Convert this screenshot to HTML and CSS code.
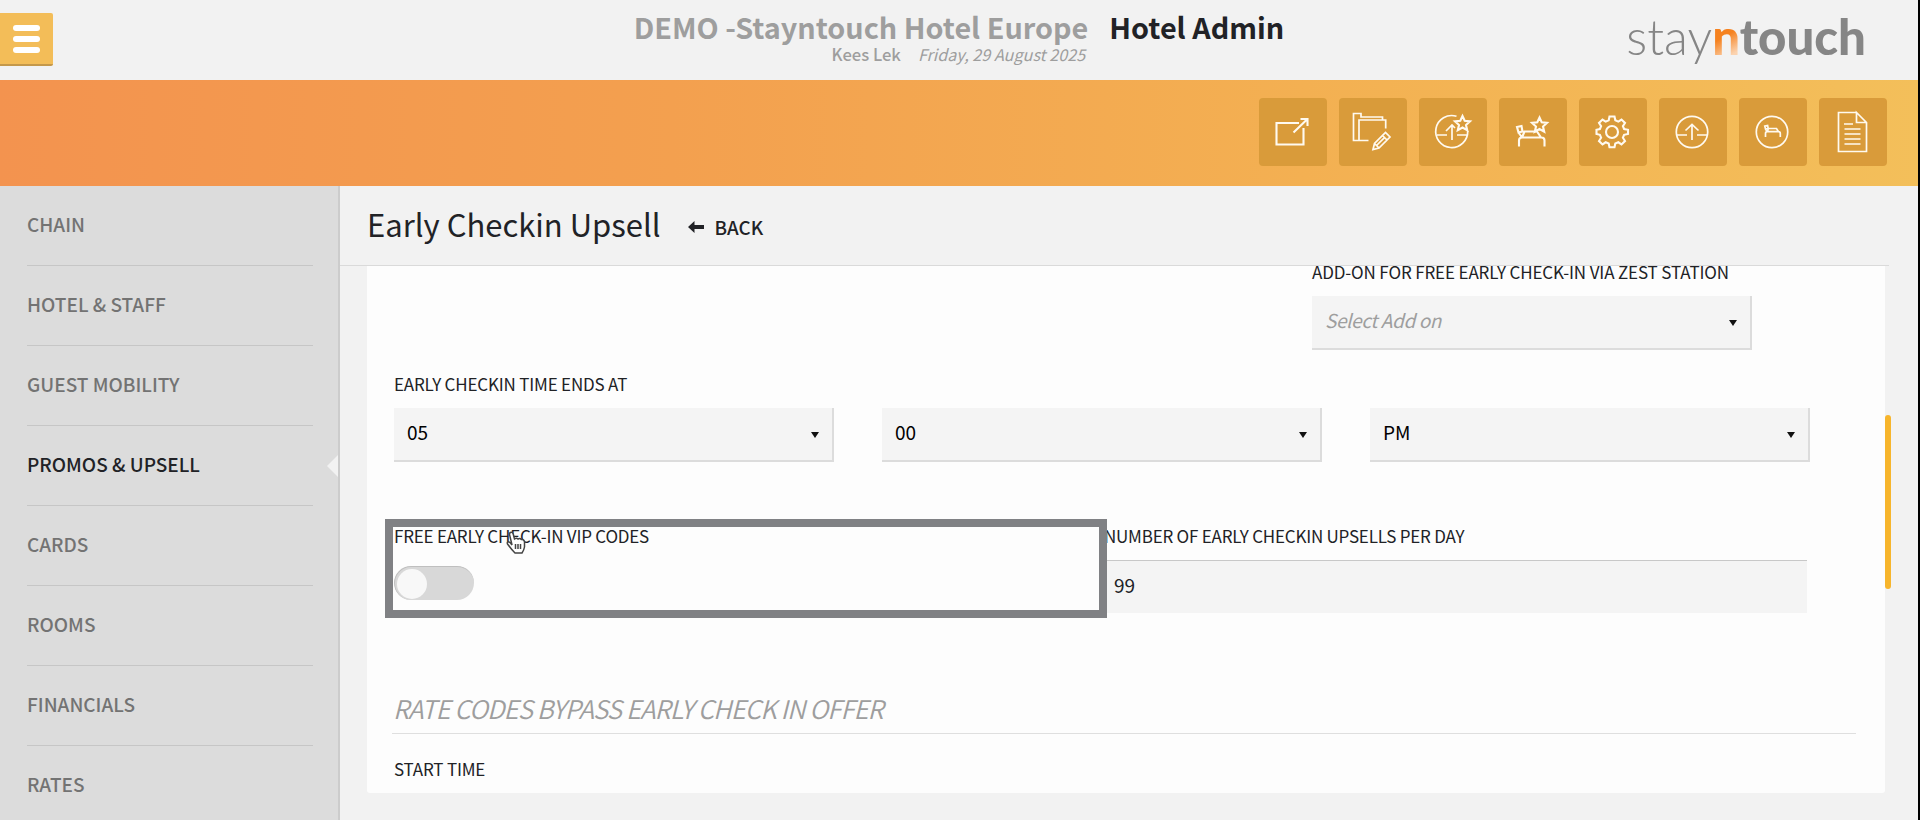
FILE: index.html
```html
<!DOCTYPE html>
<html lang="en">
  <head>
    <meta charset="UTF-8" />
    <meta name="viewport" content="width=device-width, initial-scale=1.0" />
    <title>Hotel Admin</title>
    <link rel="stylesheet" href="styles.css">
  </head>
  <body>
    <header class="header">
      <button type="button" class="menu-btn">
        <span></span>
        <span></span>
        <span></span>
      </button>
      <div class="heading">
        <div class="hotel">DEMO -Stayntouch Hotel Europe</div>
        <h1 class="area">Hotel Admin</h1>
        <div class="user">
          <span class="user-name">Kees Lek</span>
          <span class="date">Friday, 29 August 2025</span>
        </div>
      </div>
      <div class="logo"><span class="thin">stay</span><span class="n">n</span><span class="heavy">touch</span></div>
    </header>

    <nav class="toolbar">
      <button type="button" class="tool">
        <svg viewBox="0 0 68 68">
          <path d="M40 25H17.500V46.500H44.500V30M34.500 34.500L48.500 21M41.500 21H48.500V28" class="bold" />
        </svg>
      </button>
      <button type="button" class="tool">
        <svg viewBox="0 0 68 68">
          <path d="M29.500 42.500H14.500V15.500H22V19H43.500V22M46.700 30.500V22H20V42.500" />
          <path d="M34 51.500L35.500 45.500L46.500 34.500L51 39L40 50ZM35.500 45.500L40 50M43.500 37.500L48 42M38 47L45.500 39.700" />
        </svg>
      </button>
      <button type="button" class="tool">
        <svg viewBox="0 0 68 68">
          <path d="M37.500 18.300A16 16 0 1 0 48.700 33M33 42V27M27 33L33 27L36 30M18 37H28M38 37H48" />
          <path d="M43.500 18L45.700 22.800L51 23.400L47 27L48.200 32.200L43.500 29.500L38.800 32.200L40 27L36 23.400L41.300 22.800Z" class="bold" />
        </svg>
      </button>
      <button type="button" class="tool">
        <svg viewBox="0 0 68 68">
          <path d="M20 48.500V42.500Q20 39.500 23 39.500H42.500Q45.500 39.500 45.500 42.500V48.500M23 39.500L25.500 33.500H38L42 39.500M18 29L22.500 28L23.500 33.500L19.500 34.500ZM19.500 34.500L23 39.500" class="bold" />
          <path d="M40.500 19.500L42.700 24.300L48 24.900L44 28.500L45.200 33.700L40.500 31L35.800 33.700L37 28.500L33 24.900L38.300 24.300Z" class="bold" />
        </svg>
      </button>
      <button type="button" class="tool">
        <svg viewBox="0 0 68 68">
          <path class="bold" d="M30.500 18.500H35.500L36.300 22.300L39.300 23.600L42.500 21.500L46 25L43.900 28.200L45.100 31L49 31.800V36L45.100 36.800L43.900 39.700L46 43L42.500 46.400L39.300 44.300L36.300 45.500L35.500 49.300H30.500L29.700 45.500L26.700 44.300L23.500 46.400L20 43L22.100 39.700L20.900 36.800L17.500 36V31.800L20.900 31L22.100 28.200L20 25L23.500 21.500L26.700 23.600L29.700 22.300Z" />
          <circle class="bold" cx="33" cy="34" r="6" />
        </svg>
      </button>
      <button type="button" class="tool">
        <svg viewBox="0 0 68 68">
          <circle cx="33" cy="34" r="15.700" />
          <path d="M33 42V26.500M26.500 32.500L33 26.500L39.500 32.500M18 37H28M38 37H48" />
        </svg>
      </button>
      <button type="button" class="tool">
        <svg viewBox="0 0 68 68">
          <circle cx="33" cy="34" r="15.700" />
          <path d="M26.500 39V35.500Q26.500 33.700 28.300 33.700H39.500Q41.300 33.700 41.300 35.500V39M28.300 33.700L29.500 30.500H37.500L39.500 33.700M25.800 28.200L28.600 27.600L29.200 30.600L26.600 31.200ZM26.600 31.200L28.300 33.700" />
        </svg>
      </button>
      <button type="button" class="tool">
        <svg viewBox="0 0 68 68">
          <path d="M37.500 14.500H19.500V53.500H47.500V24.500L37.500 14.500V24.500H47.500M25 26H34M25.500 31H41.500M25.500 36H41.500M25.500 41H41.500M25.500 46H41.500" />
        </svg>
      </button>
    </nav>

    <div class="page">
      <aside class="sidebar">
        <a class="side-item">CHAIN</a>
        <a class="side-item">HOTEL &amp; STAFF</a>
        <a class="side-item">GUEST MOBILITY</a>
        <a class="side-item active">PROMOS &amp; UPSELL</a>
        <a class="side-item">CARDS</a>
        <a class="side-item">ROOMS</a>
        <a class="side-item">FINANCIALS</a>
        <a class="side-item">RATES</a>
      </aside>

      <main class="main">
        <div class="main-head">
          <h2 class="title">Early Checkin Upsell</h2>
          <a class="back">
            <svg class="back-arrow" viewBox="0 0 16 12">
              <path d="M0 6L6.500 0V4H16V8H6.500V12Z" />
            </svg>
            BACK
          </a>
        </div>

        <div class="scroll-area">
          <form class="panel">
            <div class="row addon">
              <div class="field">
                <label class="label">ADD-ON FOR FREE EARLY CHECK-IN VIA ZEST STATION</label>
                <div class="select placeholder">Select Add on</div>
              </div>
            </div>

            <label class="label">EARLY CHECKIN TIME ENDS AT</label>
            <div class="row times">
              <div class="select">05</div>
              <div class="select">00</div>
              <div class="select">PM</div>
            </div>

            <div class="row two">
              <div class="field vip">
                <label class="label">FREE EARLY CHECK-IN VIP CODES</label>
                <div class="switch"><span class="knob"></span></div>
                <div class="highlight"></div>
                <svg class="hand" viewBox="0 0 20 24">
                  <path d="M6 14L3.500 3.500Q3.300 1.500 5 1.200Q6.600 1 7.200 3L8.500 8Q10.500 6.500 12 8Q14 6.800 15.300 8.500Q18 8 18.500 11V16Q18 19 16 22H9Q6 19 1.500 13Q0.800 11 2.500 10.800Q4 11 6 14ZM9.500 13V18M12 13V18M14.500 13V18" />
                </svg>
              </div>
              <div class="field">
                <label class="label">NUMBER OF EARLY CHECKIN UPSELLS PER DAY</label>
                <div class="input">99</div>
              </div>
            </div>

            <h3 class="section-title">RATE CODES BYPASS EARLY CHECK IN OFFER</h3>
            <label class="label">START TIME</label>
          </form>
          <div class="scrollbar"></div>
        </div>
      </main>
    </div>
  </body>
</html>
```
FILE: styles.css
```css
* {
  box-sizing: border-box;
}
body {
  width: 100%;
  height: 820px;
  margin: 0;
  overflow: hidden;
  display: flex;
  flex-direction: column;
  background: #f2f2f2;
  border-right: 2px solid #000;
  color: #212226;
  font-family: "Noto Sans CJK SC", "Open Sans", sans-serif;
}
button {
  border: none;
  padding: 0;
}
h1,
h2,
h3 {
  margin: 0;
}
.header {
  height: 80px;
  flex: none;
  display: grid;
  grid-template-columns: 1fr auto 1fr;
  align-items: start;
}
.menu-btn {
  width: 53px;
  height: 53px;
  margin-top: 13px;
  display: flex;
  flex-direction: column;
  align-items: center;
  justify-content: center;
  gap: 5px;
  background: #f3bd58;
  border-bottom: 2px solid #c4984a;
  border-radius: 0 2px 2px 0;
}
.menu-btn span {
  width: 27px;
  height: 6px;
  border-radius: 3px;
  background: white;
}
.heading {
  display: grid;
  grid-template-columns: auto auto;
  column-gap: 21px;
  padding-top: 9px;
  white-space: nowrap;
}
.hotel,
.area {
  font-size: 28.8px;
  line-height: 36px;
  font-weight: 700;
}
.hotel {
  color: #9e9e9e;
}
.user {
  display: flex;
  justify-content: flex-end;
  gap: 17px;
  padding-right: 3px;
  font-size: 16.2px;
  line-height: 18px;
  color: #9e9e9e;
}
.user-name {
  font-size: 16.6px;
  font-weight: 500;
}
.date {
  font-style: italic;
}
.logo {
  justify-self: end;
  margin: 6px 52px 0 0;
  font-family: Lato, sans-serif;
  font-size: 49.2px;
  line-height: 60px;
  color: #868686;
}
.thin {
  font-weight: 300;
}
.heavy {
  font-weight: 900;
}
.n {
  font-weight: 900;
  background: linear-gradient(150deg, #f58220 50%, #fbd3b0 80%);
  -webkit-background-clip: text;
  background-clip: text;
  color: transparent;
}
.toolbar {
  height: 106px;
  flex: none;
  display: flex;
  justify-content: flex-end;
  gap: 12px;
  padding: 18px 31.5px 0 0;
  background: linear-gradient(90deg, #f3934f, #f3a04f 35%, #f3b052 68%, #f3bf5a);
}
.tool {
  width: 68px;
  height: 68px;
  border-radius: 4px;
  background: #d99b3a;
}
.tool svg {
  display: block;
  width: 68px;
  height: 68px;
  fill: none;
  stroke: #fffaf0;
  stroke-width: 1.7;
}
.tool .bold {
  stroke-width: 2.1;
}
.page {
  flex: 1;
  min-height: 0;
  display: flex;
}
.sidebar {
  width: 340px;
  flex: none;
  padding: 0 25px 0 27px;
  background: #dcdcdc;
  border-right: 2px solid #cccccc;
  overflow: hidden;
  position: relative;
}
.side-item {
  display: block;
  height: 80px;
  line-height: 75px;
  border-bottom: 1px solid #c6c6c6;
  color: #737373;
  font-size: 19px;
  font-weight: 500;
}
.side-item.active {
  color: #212226;
}
/* notch that points at the open section */
.side-item.active::after {
  content: "";
  position: absolute;
  right: -2px;
  top: 267px;
  border: 13px solid transparent;
  border-left: none;
  border-right-color: #f2f2f2;
}
.main {
  flex: 1;
  min-width: 0;
}
.main-head {
  height: 80px;
  width: 1549px;
  display: flex;
  align-items: center;
  gap: 27px;
  padding: 0 0 3px 27px;
  border-bottom: 1px solid #dadada;
}
.title {
  font-size: 31px;
  font-weight: 400;
  line-height: 60px;
}
.back {
  display: flex;
  align-items: center;
  gap: 11px;
  padding-top: 5px;
  font-size: 18.8px;
  font-weight: 500;
}
.back-arrow {
  width: 16px;
  height: 12px;
  fill: #212226;
}
.scroll-area {
  display: flex;
  align-items: flex-start;
  padding-left: 27px;
}
.panel {
  width: 1518px;
  height: 527px;
  padding: 0 28px 0 27px;
  background: #fdfdfd;
  border-radius: 0 0 3px 3px;
}
.label {
  display: block;
  font-size: 17px;
  line-height: 24px;
  letter-spacing: -0.19px;
  white-space: nowrap;
}
.row {
  display: grid;
}
.addon {
  grid-template-columns: 440px;
  padding: 0 0 22px 918px;
}
.addon .label {
  line-height: 12px;
  letter-spacing: -0.14px;
}
.addon .select {
  margin-top: 18px;
}
.times {
  grid-template-columns: repeat(3, 440px);
  column-gap: 48px;
  margin: 12px 0 62px;
}
.two {
  grid-template-columns: 710px 703px;
  margin-bottom: 76px;
}
.two .label {
  letter-spacing: -0.22px;
}
.select,
.input {
  height: 53px;
  font-size: 19px;
  line-height: 48px;
  background: #f4f4f4;
}
.select {
  display: flex;
  height: 54px;
  justify-content: space-between;
  padding: 0 13px;
  color: #000;
  border-right: 2px solid #dcdcdc;
  border-bottom: 2px solid #dcdcdc;
}
.select::after {
  content: "";
  align-self: center;
  margin-top: 1px;
  border: 4px solid transparent;
  border-top: 6px solid #111;
  border-bottom: none;
}
.placeholder {
  color: #9e9e9e;
  font-style: italic;
  letter-spacing: -0.4px;
}
.input {
  margin-top: 12px;
  padding-left: 10px;
  border-top: 1px solid #c8c8c8;
}
.vip {
  position: relative;
}
.switch {
  width: 80px;
  height: 34px;
  margin-top: 18px;
  padding: 2px;
  border-radius: 17px;
  background: #d8d8d8;
  border-top: 1px solid #bfbfbf;
  border-left: 1px solid #bfbfbf;
}
.knob {
  display: block;
  width: 30px;
  height: 30px;
  border-radius: 50%;
  background: #f8f8f8;
}
.highlight {
  position: absolute;
  left: -9px;
  top: -5px;
  width: 722px;
  height: 99px;
  border: 8px solid #808184;
  z-index: 1;
}
.hand {
  position: absolute;
  left: 112px;
  top: 7px;
  width: 20px;
  height: 24px;
  z-index: 2;
  fill: white;
  stroke: #444;
  stroke-width: 1.5;
}
.section-title {
  width: 1464px;
  height: 45px;
  margin: 0 0 23px -2px;
  padding-left: 1px;
  border-bottom: 1px solid #dfdfdf;
  color: #9e9e9e;
  font-size: 25.6px;
  font-weight: 350;
  font-style: italic;
  line-height: 37px;
  letter-spacing: -0.87px;
}
.scrollbar {
  width: 6px;
  height: 174px;
  margin-top: 149px;
  border-radius: 3px;
  background: #f7b52c;
}
```
